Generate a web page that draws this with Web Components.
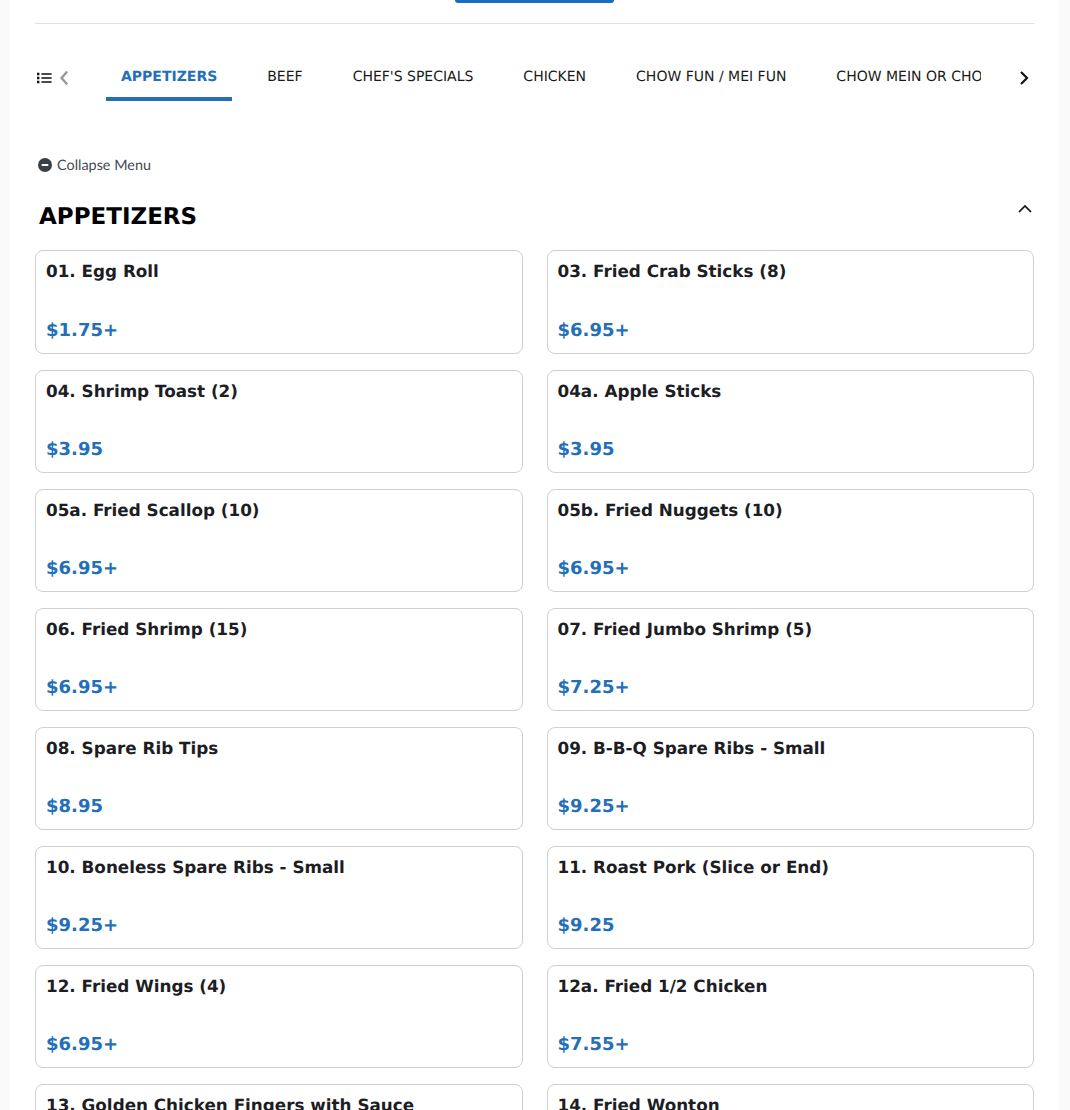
<!DOCTYPE html>
<html lang="en">
<head>
<meta charset="utf-8">
<title>Menu</title>
<style>
  html, body { margin: 0; height: 1110px; overflow: hidden; background: #fafafa; }
  body { font-family: "DejaVu Sans", sans-serif; text-rendering: geometricPrecision; }
</style>
</head>
<body>
<menu-page>
  <category-tabs>
    <tab-item active>APPETIZERS</tab-item>
    <tab-item>BEEF</tab-item>
    <tab-item>CHEF'S SPECIALS</tab-item>
    <tab-item>CHICKEN</tab-item>
    <tab-item>CHOW FUN / MEI FUN</tab-item>
    <tab-item>CHOW MEIN OR CHOP SUEY</tab-item>
  </category-tabs>
  <menu-section title="APPETIZERS">
    <menu-card name="01. Egg Roll" price="$1.75+"></menu-card>
    <menu-card name="03. Fried Crab Sticks (8)" price="$6.95+"></menu-card>
    <menu-card name="04. Shrimp Toast (2)" price="$3.95"></menu-card>
    <menu-card name="04a. Apple Sticks" price="$3.95"></menu-card>
    <menu-card name="05a. Fried Scallop (10)" price="$6.95+"></menu-card>
    <menu-card name="05b. Fried Nuggets (10)" price="$6.95+"></menu-card>
    <menu-card name="06. Fried Shrimp (15)" price="$6.95+"></menu-card>
    <menu-card name="07. Fried Jumbo Shrimp (5)" price="$7.25+"></menu-card>
    <menu-card name="08. Spare Rib Tips" price="$8.95"></menu-card>
    <menu-card name="09. B-B-Q Spare Ribs - Small" price="$9.25+"></menu-card>
    <menu-card name="10. Boneless Spare Ribs - Small" price="$9.25+"></menu-card>
    <menu-card name="11. Roast Pork (Slice or End)" price="$9.25"></menu-card>
    <menu-card name="12. Fried Wings (4)" price="$6.95+"></menu-card>
    <menu-card name="12a. Fried 1/2 Chicken" price="$7.55+"></menu-card>
    <menu-card name="13. Golden Chicken Fingers with Sauce" price="$7.25+"></menu-card>
    <menu-card name="14. Fried Wonton" price="$4.25+"></menu-card>
  </menu-section>
</menu-page>

<script>
class MenuPage extends HTMLElement {
  constructor() {
    super();
    this.attachShadow({ mode: 'open' });
    this.shadowRoot.innerHTML = `
      <style>
        :host {
          display: block;
          margin: 0 11px 0 10px;
          height: 1110px;
          overflow: hidden;
          background: #fff;
          padding: 0 25px;
        }
        .top {
          height: 23px;
          border-bottom: 1px solid #e0e0e0;
          display: flex;
          justify-content: center;
        }
        .order {
          width: 159px;
          height: 3px;
          background: #1a6cc4;
          border-radius: 0 0 4px 4px;
        }
      </style>
      <div class="top"><div class="order"></div></div>
      <slot></slot>
    `;
  }
}

class CategoryTabs extends HTMLElement {
  constructor() {
    super();
    this.attachShadow({ mode: 'open' });
    this.shadowRoot.innerHTML = `
      <style>
        :host {
          display: flex;
          align-items: flex-start;
          height: 54px;
          margin-top: 23px;
        }
        .icons {
          width: 71px;
          flex: none;
          display: flex;
          align-items: center;
          height: 14px;
          margin-top: 24px;
        }
        .strip {
          display: flex;
          gap: 20px;
          width: 875px;
          flex: none;
          overflow: hidden;
          height: 54px;
        }
        .next {
          margin: 24px 0 0 38px;
        }
        svg { display: block; flex: none; }
      </style>
      <div class="icons">
        <svg width="16" height="12" viewBox="0 0 16 12" style="margin-left:2px">
          <path d="M0 .8h2.4v2.4H0zM0 4.8h2.4v2.4H0zM0 8.8h2.4v2.4H0z" fill="#111"/>
          <path d="M4.4 2h10.2M4.4 6h10.2M4.4 10h10.2" stroke="#111" stroke-width="1.7"/>
        </svg>
        <svg width="10" height="16" viewBox="0 0 10 16" style="margin-left:6px">
          <path d="M8.2 1.5 2.6 8l5.6 6.5" fill="none" stroke="#999" stroke-width="2.4"/>
        </svg>
      </div>
      <div class="strip"><slot></slot></div>
      <svg class="next" width="10" height="14" viewBox="0 0 10 14">
        <path d="M2 1 8 7 2 13" fill="none" stroke="#111" stroke-width="2.2"/>
      </svg>
    `;
  }
}

class TabItem extends HTMLElement {
  constructor() {
    super();
    this.attachShadow({ mode: 'open' });
    this.shadowRoot.innerHTML = `
      <style>
        :host {
          display: block;
          flex: none;
          padding: 0 15px;
          height: 50px;
          line-height: 61px;
          font-size: 14px;
          color: #1a1a1a;
          white-space: nowrap;
          border-bottom: 4px solid transparent;
        }
        :host([active]) {
          color: #2470b8;
          font-weight: 700;
          border-bottom-color: #2470b8;
        }
      </style>
      <slot></slot>
    `;
  }
}

class MenuSection extends HTMLElement {
  constructor() {
    super();
    this.attachShadow({ mode: 'open' });
    this.shadowRoot.innerHTML = `
      <style>
        :host { display: block; }
        .collapse {
          display: flex;
          align-items: center;
          gap: 5px;
          margin: 54px 0 0 3px;
          height: 20px;
          font: 14.4px/20px Lato, sans-serif;
          color: #444a52;
        }
        .collapse span { position: relative; top: 1px; }
        .head {
          display: flex;
          justify-content: space-between;
          margin: 27px 0 0 4px;
          height: 48.4px;
        }
        h2 {
          margin: 0;
          font-size: 23px;
          line-height: 30px;
          font-weight: 700;
          color: #000;
        }
        .up { margin: 2px 2px 0 0; }
        .grid {
          display: grid;
          grid-template-columns: 1fr 1fr;
          column-gap: 24px;
          row-gap: 16px;
        }
        svg { display: block; flex: none; }
      </style>
      <div class="collapse">
        <svg width="14" height="14" viewBox="0 0 14 14">
          <circle cx="7" cy="7" r="7" fill="#3a4048"/>
          <rect x="3.5" y="6" width="7" height="2" rx="1" fill="#fff"/>
        </svg>
        <span>Collapse Menu</span>
      </div>
      <div class="head">
        <h2></h2>
        <svg class="up" width="14" height="10" viewBox="0 0 14 10">
          <path d="M1 8 7 2 13 8" fill="none" stroke="#111" stroke-width="1.7"/>
        </svg>
      </div>
      <div class="grid"><slot></slot></div>
    `;
    this.shadowRoot.querySelector('h2').textContent = this.getAttribute('title') || '';
  }
}

class MenuCard extends HTMLElement {
  constructor() {
    super();
    this.attachShadow({ mode: 'open' });
    this.shadowRoot.innerHTML = `
      <style>
        :host {
          display: flex;
          flex-direction: column;
          justify-content: space-between;
          box-sizing: border-box;
          height: 103.14px;
          padding: 10px 10px 12px;
          border: 1px solid #cfcfcf;
          border-radius: 8px;
          background: #fff;
        }
        .name {
          font-size: 16.8px;
          line-height: 20px;
          font-weight: 700;
          color: #1d1d24;
        }
        .price {
          font-size: 18px;
          line-height: 20px;
          font-weight: 700;
          color: #2470b8;
        }
      </style>
      <div class="name"></div>
      <div class="price"></div>
    `;
    this.shadowRoot.querySelector('.name').textContent = this.getAttribute('name');
    this.shadowRoot.querySelector('.price').textContent = this.getAttribute('price');
  }
}

customElements.define('menu-page', MenuPage);
customElements.define('category-tabs', CategoryTabs);
customElements.define('tab-item', TabItem);
customElements.define('menu-section', MenuSection);
customElements.define('menu-card', MenuCard);
</script>
</body>
</html>
